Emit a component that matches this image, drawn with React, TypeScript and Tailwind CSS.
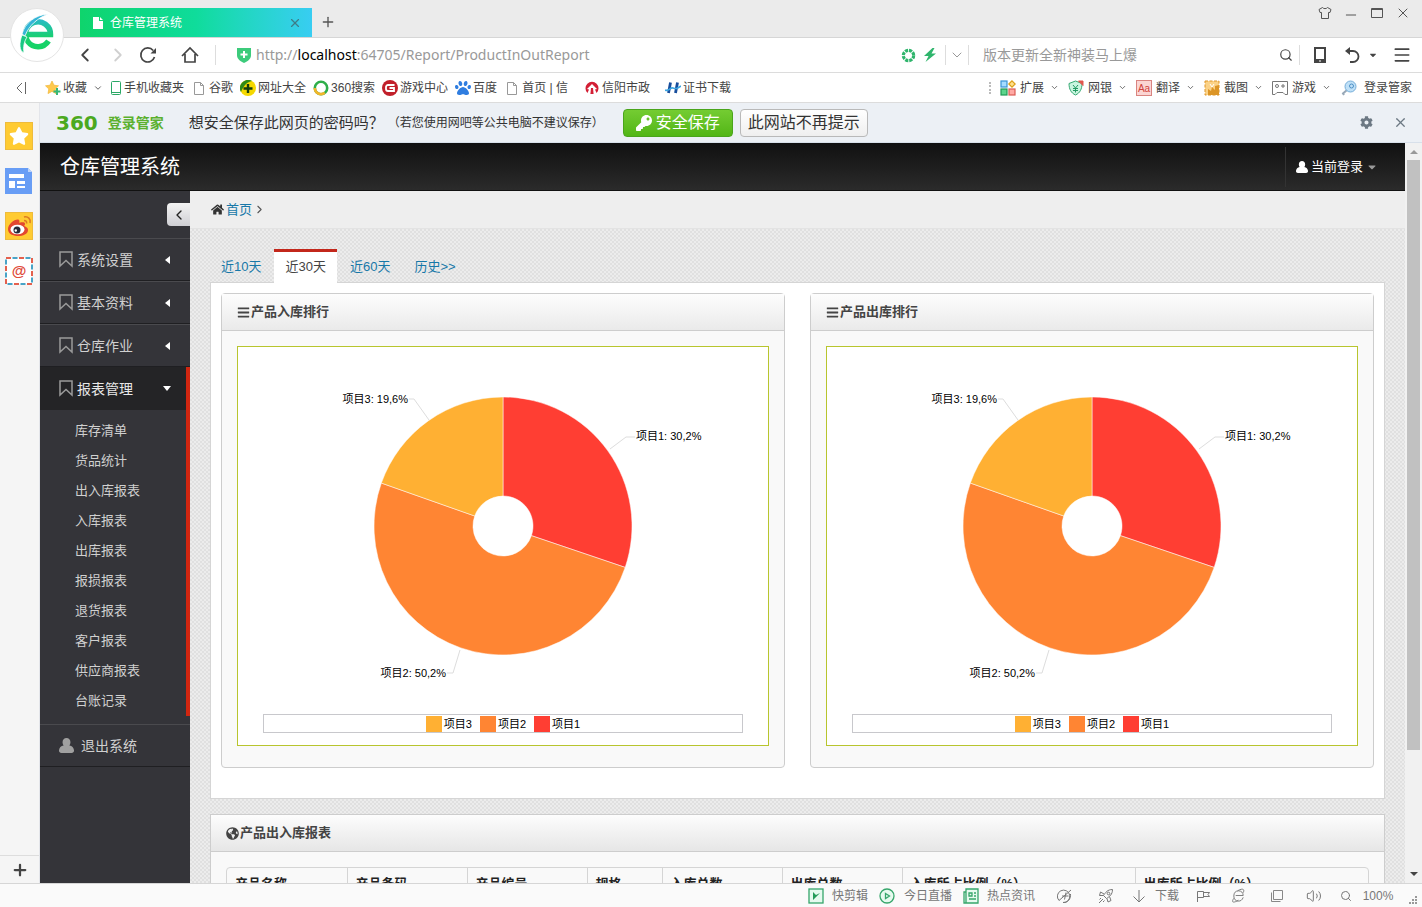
import type { ReactNode } from "react";
import {
  ChevronDown,
  ChevronLeft,
  ChevronRight,
  Menu,
  Minus,
  Plus,
  Search,
  Volume2,
  X,
} from "lucide-react";
import { FaBars, FaCaretDown, FaCog, FaGlobeAmericas, FaHome, FaKey, FaPaw, FaStar } from "react-icons/fa";

const slices = [
  { name: "项目1", value: 30.2, color: "#ff3e33" },
  { name: "项目2", value: 50.2, color: "#ff8533" },
  { name: "项目3", value: 19.6, color: "#ffb033" },
];

const labels = [
  { text: "项目1: 30,2%", x: 398, y: 93, anchor: "start", line: "372,102 388,90 397,90" },
  { text: "项目2: 50,2%", x: 208, y: 330, anchor: "end", line: "222,303 215,326 209,326" },
  { text: "项目3: 19,6%", x: 170, y: 56, anchor: "end", line: "191,73 176,52 171,52" },
] as const;

const menus = ["系统设置", "基本资料", "仓库作业"];

const reports = [
  "库存清单",
  "货品统计",
  "出入库报表",
  "入库报表",
  "出库报表",
  "报损报表",
  "退货报表",
  "客户报表",
  "供应商报表",
  "台账记录",
];

const columns = [
  { title: "产品名称", width: "w-[120px]" },
  { title: "产品条码", width: "w-[120px]" },
  { title: "产品编号", width: "w-[120px]" },
  { title: "规格", width: "w-[75px]" },
  { title: "入库总数", width: "w-[120px]" },
  { title: "出库总数", width: "w-[120px]" },
  { title: "入库所占比例（%）", width: "w-[233px]" },
  { title: "出库所占比例（%）", width: "" },
];

function PageIcon() {
  return (
    <svg width="16" height="16" viewBox="0 0 16 16" fill="none" stroke="#999">
      <path d="M3.5 2.5h6l3 3v9h-9zM9.5 2.5v3h3" />
    </svg>
  );
}

function PhoneIcon() {
  return (
    <svg width="12" height="16" viewBox="0 0 12 16" fill="none" stroke="#2aa866">
      <rect x="1.5" y="1.5" width="9" height="13" rx="1" />
      <path d="M2 12.5h8" />
    </svg>
  );
}

function StarPlusIcon() {
  return (
    <svg width="16" height="16" viewBox="0 0 16 16">
      <path d="M7 1l2 4.2 4.5.6-3.3 3.2.8 4.6L7 11.4 3 13.6l.8-4.6L.5 5.8 5 5.2z" fill="#ffc94d" stroke="#eeb028" strokeWidth=".6" />
      <path d="M12 8v7M8.5 11.5h7" stroke="#35b878" strokeWidth="2" />
    </svg>
  );
}

function SitesIcon() {
  return (
    <svg width="16" height="16" viewBox="0 0 16 16">
      <circle cx="8" cy="8" r="8" fill="#f5d800" />
      <path d="M1 4a8 8 0 0 1 11-3C7 2 4 5 1 12a8 8 0 0 1 0-8z" fill="#2f8a18" />
      <path d="M8 4v9M3.5 8.5h9" stroke="#163e0c" strokeWidth="2.4" />
    </svg>
  );
}

function RingIcon() {
  return (
    <svg width="16" height="16" viewBox="0 0 16 16" fill="none" strokeWidth="2.6">
      <circle cx="8" cy="8" r="6.2" stroke="#2fae4a" />
      <path d="M1.8 8a6.2 6.2 0 0 0 10 4.800" stroke="#f3b62a" />
    </svg>
  );
}

function GameCenterIcon() {
  return (
    <svg width="16" height="16" viewBox="0 0 16 16" fill="none">
      <circle cx="8" cy="8" r="8" fill="#c1202b" />
      <path d="M12.5 5H6a2 2 0 0 0-2 2v2a2 2 0 0 0 2 2h6V8H7.5" stroke="#fff" strokeWidth="1.8" />
    </svg>
  );
}

function CityIcon() {
  return (
    <svg width="16" height="16" viewBox="0 0 16 16" fill="#d31f35">
      <path d="M3.5 13A6.500 6.500 0 1 1 12.5 13L11 9.5 13 9 8 4 3 9l2 .5z" />
      <path d="M7 8h2l.6 6H6.4z" />
    </svg>
  );
}

function CertIcon() {
  return (
    <svg width="16" height="16" viewBox="0 0 16 16" fill="none">
      <path d="M5.5 2.5L3.5 13M12.5 2.5L10.5 13" stroke="#174d9c" strokeWidth="2.8" />
      <path d="M0 10c4 2 5-3 8-2s4 1 8-2" stroke="#3da5e0" strokeWidth="1.6" />
    </svg>
  );
}

function ExtensionsIcon() {
  return (
    <svg width="16" height="16" viewBox="0 0 16 16" strokeWidth="1.2">
      <rect x="1" y="1" width="6" height="6" fill="#a6dcff" stroke="#3793d6" />
      <rect x="1" y="9" width="6" height="6" fill="#5bd48b" stroke="#209956" />
      <rect x="9" y="9" width="6" height="6" fill="#ffa9a4" stroke="#db5c56" />
      <path d="M12 .8L15.2 4 12 7.2 8.8 4z" fill="#ffe08a" stroke="#dd9e16" />
    </svg>
  );
}

function BankIcon() {
  return (
    <svg width="16" height="16" viewBox="0 0 16 16" fill="none">
      <path d="M1 3.5L7.5 1 14 3.5C14 9 12 13 7.5 15 3 13 1 9 1 3.5z" fill="#c9f5df" stroke="#35a872" />
      <path d="M5 5l2.5 3L10 5M7.5 8v4.5M5 8.5h5M5 10.5h5" stroke="#249a63" />
      <path d="M10.5 1H15v4.5z" fill="#e2574d" stroke="#e2574d" />
    </svg>
  );
}

function TranslateIcon() {
  return (
    <svg width="16" height="16" viewBox="0 0 16 16">
      <rect x=".5" y=".5" width="15" height="15" fill="#fbd5d3" stroke="#d98480" />
      <text x="8" y="12" textAnchor="middle" fontSize="10" fill="#d0433c">Aa</text>
    </svg>
  );
}

function CaptureIcon() {
  return (
    <svg width="16" height="16" viewBox="0 0 16 16" fill="none">
      <rect x="1" y="1" width="14" height="14" fill="#fbd287" stroke="#dd9526" strokeDasharray="3 1.5" />
      <path d="M4 15V9l3 2 1-4 3 3V6l4-1v10z" fill="#dc9526" />
      <path d="M6 4l2 3 2-3" stroke="#fff" />
    </svg>
  );
}

function GamepadIcon() {
  return (
    <svg width="16" height="16" viewBox="0 0 16 16" fill="none" stroke="#777">
      <path d="M3 14.5H.5v-13h15v13H13l-2-2H5z" />
      <circle cx="5" cy="6" r="1.500" />
      <path d="M9 6h4M11 4v4" />
    </svg>
  );
}

function KeyRingIcon() {
  return (
    <svg width="16" height="16" viewBox="0 0 16 16" fill="none">
      <path d="M6 10l-4 3.5 1 1.5" stroke="#98a8b7" strokeWidth="2" />
      <circle cx="9.5" cy="6.5" r="5.500" fill="#bfe0f7" stroke="#76aed9" />
      <circle cx="10.5" cy="6" r="2" stroke="#4c8fc5" />
    </svg>
  );
}

function UserIcon({ size, className }: { size: number; className?: string }) {
  return (
    <svg width={size} height={size} viewBox="0 0 14 14" fill="currentColor" className={className}>
      <path d="M7 0c2.200 0 3.700 1.700 3.700 4 0 1.200-.4 2.200-1 3 2.500.4 4 2 4.300 4.500.1 1.600-.7 2.500-2.200 2.500H2.200C.7 14-.1 13.100 0 11.500.3 9 1.800 7.400 4.300 7c-.6-.8-1-1.800-1-3C3.300 1.700 4.800 0 7 0z" />
    </svg>
  );
}

const bookmarks: { text: string; icon: ReactNode }[] = [
  { text: "手机收藏夹", icon: <PhoneIcon /> },
  { text: "谷歌", icon: <PageIcon /> },
  { text: "网址大全", icon: <SitesIcon /> },
  { text: "360搜索", icon: <RingIcon /> },
  { text: "游戏中心", icon: <GameCenterIcon /> },
  { text: "百度", icon: <FaPaw size={16} className="text-[#2f7de0]" /> },
  { text: "首页 | 信", icon: <PageIcon /> },
];

const tools: { text: string; icon: ReactNode }[] = [
  { text: "扩展", icon: <ExtensionsIcon /> },
  { text: "网银", icon: <BankIcon /> },
  { text: "翻译", icon: <TranslateIcon /> },
  { text: "截图", icon: <CaptureIcon /> },
  { text: "游戏", icon: <GamepadIcon /> },
];

function BrowserLogo() {
  return (
    <div className="absolute left-[10px] top-2 flex size-[54px] items-center justify-center rounded-full border border-[#e4e4e4] bg-white">
      <svg width="36" height="42" viewBox="0 0 36 42" fill="none">
        <defs>
          <linearGradient id="logo" x1="0" y1="4" x2="0" y2="36" gradientUnits="userSpaceOnUse">
            <stop offset="0" stopColor="#2bb9cf" />
            <stop offset="0.6" stopColor="#18d06f" />
            <stop offset="1" stopColor="#16d463" />
          </linearGradient>
        </defs>
        <path d="M7 20.500H31.500A12.500 12.500 0 1 0 29.500 27" stroke="url(#logo)" strokeWidth="5.500" />
        <path d="M3 20C6 9 16 1 29 0c-10 4-19 11-23 22z" fill="#35b5d6" stroke="#fff" strokeWidth=".8" />
        <path d="M3 21C0 29 0 37 5 39c-1-6 0-11 3-16z" fill="#1ac783" stroke="#fff" strokeWidth=".8" />
      </svg>
    </div>
  );
}

function TitleBar() {
  return (
    <div className="flex h-[38px] items-end border-b border-[#d6d6d6] bg-[#ebebeb] pl-20 text-[#555]">
      <div className="flex h-[29px] w-[232px] items-center bg-linear-to-r from-[#0fd46c] via-[#0fdc9b] to-[#38cdf2] pl-3 pr-[10px] text-white">
        <svg width="12" height="14" viewBox="0 0 12 14">
          <path d="M1 1h6v4h4v8H1zM8 1l3 3H8z" fill="#fff" />
        </svg>
        <span className="ml-[6px] flex-1 text-[12px] leading-4">仓库管理系统</span>
        <button aria-label="关闭标签" className="text-[#3e7c88]">
          <X size={14} />
        </button>
      </div>
      <button aria-label="新建标签" className="mb-[7px] ml-2">
        <Plus size={16} />
      </button>
      <div className="mb-[14px] ml-auto flex items-center gap-3 pr-3">
        <button aria-label="皮肤">
          <svg width="14" height="14" viewBox="0 0 14 14" fill="none" stroke="#555">
            <path d="M4.5 1.5c1 1.500 4 1.500 5 0l3.500 2-1 3h-1.500v6h-7v-6H2l-1-3z" />
          </svg>
        </button>
        <button aria-label="最小化"><Minus size={16} strokeWidth={1.5} className="mt-1 -mx-px" /></button>
        <button aria-label="最大化">
          <svg width="14" height="14" viewBox="0 0 14 14" fill="none" stroke="#555">
            <path d="M1.5 2.5h11v9h-11zM1.5 3.5h11" />
          </svg>
        </button>
        <button aria-label="关闭"><X size={16} strokeWidth={1.5} className="-mx-px" /></button>
      </div>
    </div>
  );
}

function AddressBar() {
  return (
    <div className="flex h-[35px] items-center border-b border-[#dcdcdc] bg-white pl-[74px] pr-[10px] text-[#444]">
      <button aria-label="后退" className="w-5"><ChevronLeft size={22} /></button>
      <button aria-label="前进" className="ml-[13px] w-5 text-[#d0d0d0]"><ChevronRight size={22} /></button>
      <button aria-label="刷新" className="ml-3">
        <svg width="18" height="18" viewBox="0 0 18 18" fill="none" stroke="#444" strokeWidth="1.7">
          <path d="M15.5 11a7 7 0 1 1-1.300-6.500" />
          <path d="M17 2v5.500h-5.500z" fill="#444" stroke="none" />
        </svg>
      </button>
      <button aria-label="主页" className="ml-6">
        <svg width="18" height="18" viewBox="0 0 18 18" fill="none" stroke="#444" strokeWidth="1.7">
          <path d="M1 10l8-8 8 8M4 8v8h10V8" />
        </svg>
      </button>
      <span className="ml-4 h-5 w-px bg-[#ddd]" />
      <svg className="ml-5" width="16" height="16" viewBox="0 0 16 16">
        <path d="M1 1h14v7c0 4-3 6-7 8-4-2-7-4-7-8z" fill="#3ccb7b" />
        <path d="M8 4v7M4.5 7.5h7" stroke="#fff" strokeWidth="2" />
      </svg>
      <div
        role="textbox"
        aria-label="地址"
        className="ml-1 min-w-0 flex-1 truncate font-['Noto_Sans','Noto_Sans_CJK_SC',sans-serif] text-[14px] leading-5 text-[#999]"
      >
        http://<span className="text-black">localhost</span>:64705/Report/ProductInOutReport
      </div>
      <svg width="15" height="15" viewBox="0 0 16 16" fill="none">
        <circle cx="8" cy="8" r="5.500" stroke="#2fb56c" strokeWidth="3.4" strokeDasharray="3.3 1" />
      </svg>
      <svg className="ml-[7px]" width="14" height="14" viewBox="0 0 14 14">
        <path d="M9.500 0L1 8h4.500L2.500 14 13 5.500H8.500L11.500 0z" fill="#2fb56c" />
      </svg>
      <span className="ml-2 h-5 w-px bg-[#ddd]" />
      <button aria-label="更多" className="ml-[3px] text-[#999]"><ChevronDown size={16} strokeWidth={1.5} /></button>
      <span className="ml-[3px] h-5 w-px bg-[#ddd]" />
      <input
        aria-label="搜索"
        placeholder="版本更新全新神装马上爆"
        className="ml-[14px] w-[296px] text-[14px] leading-5 outline-none placeholder:text-[#999]"
      />
      <button aria-label="搜索按钮"><Search size={14} /></button>
      <span className="ml-[6px] h-5 w-px bg-[#ddd]" />
      <button aria-label="手机" className="ml-[14px]">
        <svg width="12" height="16" viewBox="0 0 12 16">
          <path d="M0 0h12v16H0zM2 2v10h8V2z" fill="#444" fillRule="evenodd" />
          <path d="M5 14h2" stroke="#fff" />
        </svg>
      </button>
      <button aria-label="恢复" className="ml-[18px]">
        <svg width="16" height="16" viewBox="0 0 16 16" fill="none" stroke="#444" strokeWidth="1.8">
          <path d="M3 4h6a5.500 5.500 0 0 1 0 11H6" />
          <path d="M6 0L1 4l5 4z" fill="#444" stroke="none" />
        </svg>
      </button>
      <FaCaretDown size={10} className="ml-2" />
      <button aria-label="菜单" className="ml-[14px]"><Menu size={20} /></button>
    </div>
  );
}

function Bookmark({ text, icon }: { text: string; icon: ReactNode }) {
  return (
    <a href="#" className="flex items-center gap-[2px] whitespace-nowrap">
      {icon}
      {text}
    </a>
  );
}

function BookmarkBar() {
  return (
    <div className="flex h-[30px] items-center border-b border-[#dcdcdc] bg-white pl-[15px] pr-[10px] text-[12px] leading-4 text-[#444]">
      <button aria-label="收起" className="w-[30px]">
        <svg width="12" height="12" viewBox="0 0 12 12" fill="none" stroke="#666">
          <path d="M7 1L2 6l5 5M10.5 0v12" />
        </svg>
      </button>
      <Bookmark text="收藏" icon={<StarPlusIcon />} />
      <ChevronDown size={10} className="ml-[6px] mr-[7px]" />
      <div className="flex items-center gap-[7px]">
        {bookmarks.map((item) => (
          <Bookmark key={item.text} {...item} />
        ))}
      </div>
      <div className="ml-4 flex items-center gap-[15px]">
        <Bookmark text="信阳市政" icon={<CityIcon />} />
        <Bookmark text="证书下载" icon={<CertIcon />} />
      </div>
      <span className="ml-auto mr-[9px] h-3 border-l-2 border-dotted border-[#bbb]" />
      {tools.map((item) => (
        <button key={item.text} className="mr-[9px] flex items-center whitespace-nowrap">
          {item.icon}
          <span className="ml-1">{item.text}</span>
          <ChevronDown size={9} className="ml-[6px]" />
        </button>
      ))}
      <button className="ml-px flex items-center gap-[7px] whitespace-nowrap">
        <KeyRingIcon />
        登录管家
      </button>
    </div>
  );
}

function Rail() {
  return (
    <div className="flex w-10 shrink-0 flex-col border-r border-[#e3e5ea] bg-[#f5f5f5]">
      <div className="flex flex-1 flex-col gap-[17px] pl-[5px] pt-[19px]">
        <button aria-label="收藏夹" className="flex size-7 items-center justify-center border border-[#eebb3c] bg-[#ffcb32] text-white">
          <FaStar size={20} />
        </button>
        <button aria-label="新闻" className="size-7">
          <svg width="28" height="28" viewBox="0 0 28 28">
            <path d="M0 1h23l4 4v22H0z" fill="#689df5" />
            <path d="M23 1v4h4z" fill="#bcd3fb" />
            <path d="M4 7h15v4H4zM4 14h6v7H4zM12 14h8v3h-8zM12 19h8v2h-8z" fill="#fff" />
          </svg>
        </button>
        <button aria-label="微博" className="size-7">
          <svg width="28" height="28" viewBox="0 0 28 28" fill="none">
            <rect x=".5" y=".5" width="27" height="27" fill="#ffcb32" stroke="#eebb3c" />
            <path d="M3 17c0-5 8-11 11-9 1 1 0 3 0 3s6-2 6 1c0 1-1 2-1 2s4 1 4 4c0 4-5 6-10 6S3 22 3 17z" fill="#e3472f" />
            <ellipse cx="12.5" cy="17.5" rx="7" ry="4.800" fill="#fff" />
            <circle cx="12" cy="18" r="3.500" fill="#272c3b" />
            <circle cx="10.8" cy="18.5" r="1.200" fill="#fff" />
            <path d="M19 5c4-1 7 2 6 6M19 8.5c2 0 3 1 2.500 3" stroke="#dc7b22" strokeWidth="1.6" />
          </svg>
        </button>
        <button aria-label="邮箱" className="size-7">
          <svg width="28" height="28" viewBox="0 0 28 28" fill="none">
            <rect x="1" y="1" width="26" height="26" fill="#fff" stroke="#e4604d" strokeWidth="2" strokeDasharray="5 8" />
            <rect x="1" y="1" width="26" height="26" stroke="#48a3c7" strokeWidth="2" strokeDasharray="5 8" strokeDashoffset="-6.5" />
            <text x="14" y="19" textAnchor="middle" fontSize="15" fontWeight="bold" fill="#e04a38">@</text>
          </svg>
        </button>
      </div>
      <button aria-label="添加" className="flex h-7 items-center justify-center border-t border-[#ddd] text-[#444]">
        <Plus size={18} strokeWidth={3} />
      </button>
    </div>
  );
}

function LoginNotice() {
  return (
    <div className="flex h-10 shrink-0 items-center border-b border-[#d8e0ea] bg-[#ecf0f5] pl-4 pr-[14px] text-[#333]">
      <span className="font-['DejaVu_Sans',sans-serif] text-[20px] leading-5 font-bold text-[#4ba920]">360</span>
      <span className="ml-[10px] text-[14px] leading-5 font-bold text-[#5bb02f]">登录管家</span>
      <span className="ml-[25px] whitespace-nowrap text-[15px] leading-5">想安全保存此网页的密码吗？</span>
      <span className="ml-1 whitespace-nowrap text-[12px] leading-5">（若您使用网吧等公共电脑不建议保存）</span>
      <button className="ml-[19px] flex h-7 w-[110px] items-center justify-center gap-1 rounded-sm border border-[#4aa51c] bg-linear-to-b from-[#74cc32] to-[#52b614] text-[16px] leading-5 whitespace-nowrap text-white">
        <FaKey size={16} />
        安全保存
      </button>
      <button className="ml-[7px] h-7 w-[128px] rounded-sm border border-[#b9b9b9] bg-linear-to-b from-white to-[#efefef] text-[16px] leading-5 whitespace-nowrap">
        此网站不再提示
      </button>
      <button aria-label="设置" className="ml-auto text-[#6c7883]"><FaCog size={13} /></button>
      <button aria-label="关闭提示" className="ml-5 text-[#6c7883]"><X size={15} /></button>
    </div>
  );
}

function BookmarkOutline() {
  return (
    <svg width="14" height="17" viewBox="0 0 14 17" fill="none" stroke="#9a9a9a" strokeWidth="1.5">
      <path d="M1 1h12v14L7 9.500l-6 5.500z" />
    </svg>
  );
}

function Sidebar() {
  return (
    <nav className="w-[150px] shrink-0 bg-[#343439] text-[14px] leading-5 text-[#d0d0d0]">
      <div className="flex h-[47px] justify-end pt-3">
        <button aria-label="收起菜单" className="flex h-[23px] w-[23px] items-center justify-center rounded-l bg-linear-to-b from-[#f3f3f3] to-[#cfcfd4] text-[#222]">
          <ChevronLeft size={16} />
        </button>
      </div>
      {menus.map((name) => (
        <a key={name} href="#" className="flex h-[43px] items-center border-t border-b border-t-[#4a4a4e] border-b-[#1f1f22] pl-[19px] pr-5">
          <BookmarkOutline />
          <span className="ml-1 flex-1">{name}</span>
          <span className="border-y-4 border-r-[5px] border-y-transparent border-r-white" />
        </a>
      ))}
      <div className="border-r-4 border-[#d12610]">
        <a href="#" className="flex h-[43px] items-center bg-[#242426] pl-[19px] pr-[15px] text-[#e8e8e8]">
          <BookmarkOutline />
          <span className="ml-1 flex-1">报表管理</span>
          <span className="border-x-4 border-t-[5px] border-x-transparent border-t-white" />
        </a>
        <ul className="pt-[6px] text-[13px]">
          {reports.map((name) => (
            <li key={name}>
              <a href="#" className="block pl-[35px] leading-[30px]">{name}</a>
            </li>
          ))}
        </ul>
      </div>
      <a href="#" className="mt-2 flex h-[43px] items-center border-y border-t-[#4a4a4e] border-b-[#1f1f22] pl-[19px]">
        <UserIcon size={15} className="text-[#a0a0a0]" />
        <span className="ml-[7px]">退出系统</span>
      </a>
    </nav>
  );
}

function point(radius: number, share: number) {
  const angle = (share / 100) * Math.PI * 2;
  return `${265 + radius * Math.sin(angle)} ${179 - radius * Math.cos(angle)}`;
}

function PieChart({ title }: { title: string }) {
  let end = 0;
  return (
    <section className="min-w-0 flex-1 rounded-sm border border-[#cdcdcd] bg-[#f9f9f9]">
      <h2 className="flex h-[37px] items-center gap-px border-b border-[#cdcdcd] bg-linear-to-b from-[#fdfdfd] to-[#eaeaea] pl-[15px] text-[13px] leading-5 font-bold text-[#444]">
        <FaBars size={13} />
        {title}
      </h2>
      <div className="px-[15px] pb-[21px] pt-[15px]">
        <div className="border border-[#b8c52e] bg-white px-[25px] pb-3">
          <svg viewBox="25 0 480 367" className="h-[367px] w-full" role="img" aria-label={title}>
            {slices.map((slice) => {
              const start = end;
              end += slice.value;
              const large = slice.value > 50 ? 1 : 0;
              return (
                <path
                  key={slice.name}
                  d={`M${point(129, start)}A129 129 0 ${large} 1 ${point(129, end)}L${point(30, end)}A30 30 0 ${large} 0 ${point(30, start)}z`}
                  fill={slice.color}
                  stroke="#fff"
                  strokeWidth="0.5"
                />
              );
            })}
            {labels.map((label) => (
              <g key={label.text}>
                <polyline points={label.line} fill="none" stroke="#ddd" />
                <text x={label.x} y={label.y} textAnchor={label.anchor} fontSize="11" fill="#000">
                  {label.text}
                </text>
              </g>
            ))}
          </svg>
          <ul className="flex h-[19px] items-center justify-center gap-2 border border-[#c8c8cc] text-[11px] leading-4 text-black">
            {slices
              .slice()
              .reverse()
              .map((slice) => (
                <li key={slice.name} className="flex items-center gap-[2px]">
                  <span className="size-4" style={{ backgroundColor: slice.color }} />
                  {slice.name}
                </li>
              ))}
          </ul>
        </div>
      </div>
    </section>
  );
}

function Report() {
  return (
    <main className="min-w-0 flex-1 bg-[#e6e6e6] bg-[repeating-conic-gradient(#ececec_0_25%,#e0e0e0_0_50%)] bg-[length:4px_4px] text-[13px] leading-5">
      <div className="flex h-[38px] items-center border-b border-[#e3e3e3] bg-[#eee] pl-[21px]">
        <FaHome size={13} className="text-[#333]" />
        <a href="#" className="ml-[2px] text-[#1778a8]">首页</a>
        <ChevronRight size={13} className="ml-px text-[#555]" />
      </div>
      <div className="px-5 pt-5">
        <div className="flex h-[33px] gap-[2px] text-[#1778a8]">
          <button className="border-t-[3px] border-transparent px-[11px]">近10天</button>
          <button className="relative -mb-px border-t-[3px] border-[#c3271b] bg-white px-[11px] pb-px text-[#444]">近30天</button>
          <button className="border-t-[3px] border-transparent px-[11px]">近60天</button>
          <button className="border-t-[3px] border-transparent px-[11px]">历史&gt;&gt;</button>
        </div>
        <div className="flex gap-[25px] border border-[#d5d5d5] bg-white px-[10px] pb-[30px] pt-[10px]">
          <PieChart title="产品入库排行" />
          <PieChart title="产品出库排行" />
        </div>
        <section className="mt-[15px] border border-[#cdcdcd] bg-[#f9f9f9]">
          <h2 className="flex h-[37px] items-center gap-px border-b border-[#cdcdcd] bg-linear-to-b from-[#fdfdfd] to-[#e6e6e6] pl-[15px] font-bold text-[#444]">
            <FaGlobeAmericas size={13} />
            产品出入库报表
          </h2>
          <div className="p-[15px]">
            <div className="rounded border border-[#d5d5d5]">
              <table className="w-full table-fixed text-left text-[#222]">
                <thead>
                  <tr className="divide-x divide-[#d5d5d5]">
                    {columns.map((column) => (
                      <th key={column.title} className={`px-2 pb-2 pt-[6px] font-bold whitespace-nowrap ${column.width}`}>
                        {column.title}
                      </th>
                    ))}
                  </tr>
                </thead>
              </table>
            </div>
          </div>
        </section>
      </div>
    </main>
  );
}

function Scrollbar() {
  return (
    <div className="flex w-[17px] shrink-0 flex-col items-center bg-[#f1f1f1] py-[7px]">
      <span className="border-x-4 border-b-4 border-x-transparent border-b-[#999]" />
      <span className="mt-[6px] h-[590px] w-[13px] bg-[#c1c1c1]" />
      <span className="mt-auto border-x-4 border-t-4 border-x-transparent border-t-[#444]" />
    </div>
  );
}

function StatusBar() {
  return (
    <footer className="flex h-6 shrink-0 items-center justify-end border-t border-[#d6d6d6] bg-[#fafafa] pr-1 text-[12px] leading-4 text-[#777]">
      <button className="flex items-center gap-2 whitespace-nowrap">
        <svg width="16" height="16" viewBox="0 0 16 16" fill="none" stroke="#36a66b" strokeWidth="1.3">
          <rect x="1" y="1" width="14" height="14" fill="#e6faef" />
          <path d="M5 4l3 3 4-2-7 7z" fill="#249b59" stroke="none" />
        </svg>
        快剪辑
      </button>
      <button className="ml-[11px] flex items-center gap-[9px] whitespace-nowrap">
        <svg width="16" height="16" viewBox="0 0 16 16" fill="none" stroke="#36a66b" strokeWidth="1.3">
          <circle cx="8" cy="8" r="7" fill="#e6faef" />
          <path d="M6.5 5.500l4 2.500-4 2.500z" />
        </svg>
        今日直播
      </button>
      <button className="ml-[11px] flex items-center gap-2 whitespace-nowrap">
        <svg width="16" height="16" viewBox="0 0 16 16" fill="none" stroke="#36a66b" strokeWidth="1.3">
          <path d="M3 1h12v14H1V4h2zM3 4v11" fill="#e6faef" />
          <path d="M6 5h3v3H6zM11 5h2M11 8h2M6 11h7" />
        </svg>
        热点资讯
      </button>
      <button aria-label="加速" className="ml-[22px]">
        <svg width="16" height="16" viewBox="0 0 16 16" fill="none" stroke="#777">
          <path d="M2 12.500A6.200 6.200 0 1 1 6 14.500M6 14.500c5 .5 8-4 7.500-8.500M2 12.500L14 2M5 8h6.500M9 4.500L7.500 11.500" />
        </svg>
      </button>
      <button aria-label="火箭" className="ml-[25px]">
        <svg width="16" height="16" viewBox="0 0 16 16" fill="none" stroke="#777">
          <path d="M14.5 1.5c-5 0-7 3-9 6l3 3c3-2 6-4 6-9zM6 6L2.5 4 1.5 7.500l4 0M9 10.500l1 3.500 3-1.500-1.500-4M5 11l-4 4M3 10l-1.500 1.500M6.500 12.500L5 14" />
          <circle cx="10.5" cy="5.5" r="1.300" />
        </svg>
      </button>
      <button className="ml-[18px] flex items-center gap-[9px] whitespace-nowrap">
        <svg width="14" height="14" viewBox="0 0 14 14" fill="none" stroke="#777">
          <path d="M7 1v12M1.5 7.5L7 13l5.500-5.500" />
        </svg>
        下载
      </button>
      <button aria-label="标记" className="ml-4">
        <svg width="16" height="14" viewBox="0 0 16 14" fill="none" stroke="#777">
          <path d="M2.5 13V2.5h6v6h-6M8.5 3.500h6l-1.500 2 1.500 2H8.500" />
        </svg>
      </button>
      <button aria-label="浏览模式" className="ml-5">
        <svg width="15" height="15" viewBox="0 0 16 16" fill="none" stroke="#777">
          <path d="M13 10c-1 3-3 4-5 4-3 0-5-2-5-5.500S5 3 8 3s5 2 5 5H5M3 11c-4 6 2 4 5 2M7 3c5-3 8-2 6 2" />
        </svg>
      </button>
      <button aria-label="窗口" className="ml-6">
        <svg width="14" height="14" viewBox="0 0 14 14" fill="none" stroke="#888">
          <path d="M3.5 1.5h9v9h-9zM1.5 3.5v9h9" />
        </svg>
      </button>
      <button aria-label="声音" className="ml-[22px]"><Volume2 size={16} strokeWidth={1.5} /></button>
      <button className="ml-[18px] flex items-center gap-[10px]">
        <Search size={12} />
        <span className="w-8">100%</span>
      </button>
      <svg className="ml-[14px] mt-2" width="10" height="10" viewBox="0 0 10 10" fill="#999">
        <path d="M7 1h2v2H7zM4 4h2v2H4zM7 4h2v2H7zM1 7h2v2H1zM4 7h2v2H4zM7 7h2v2H7z" />
      </svg>
    </footer>
  );
}

export default function App() {
  return (
    <div className="relative flex h-screen flex-col overflow-hidden bg-white font-['Liberation_Sans','Noto_Sans_CJK_SC',sans-serif]">
      <TitleBar />
      <AddressBar />
      <BookmarkBar />
      <BrowserLogo />
      <div className="flex min-h-0 flex-1">
        <Rail />
        <div className="flex min-w-0 flex-1 flex-col">
          <LoginNotice />
          <div className="flex min-h-0 flex-1">
            <div className="flex min-w-0 flex-1 flex-col overflow-hidden">
              <header className="flex h-12 shrink-0 items-center justify-between border-b border-[#111] bg-linear-to-b from-[#111] to-[#2b2b2b] pl-5 text-white">
                <h1 className="text-[20px] leading-7">仓库管理系统</h1>
                <button className="flex h-10 w-[120px] items-center border-l border-[#333] pl-[10px] text-[13px] leading-5">
                  <UserIcon size={12} />
                  <span className="ml-[3px]">当前登录</span>
                  <FaCaretDown size={12} className="ml-[3px] text-[#999]" />
                </button>
              </header>
              <div className="flex flex-1">
                <Sidebar />
                <Report />
              </div>
            </div>
            <Scrollbar />
          </div>
        </div>
      </div>
      <StatusBar />
    </div>
  );
}
